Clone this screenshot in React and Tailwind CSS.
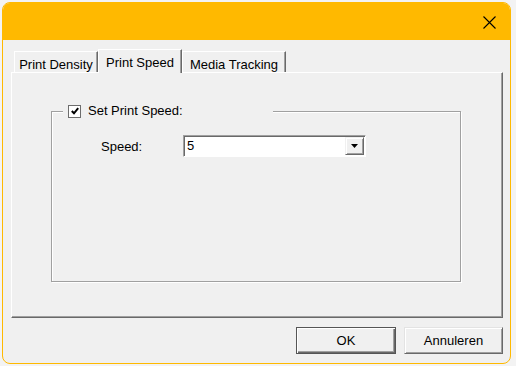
import React from 'react';

const font = { fontFamily: '"Liberation Sans", Arial, sans-serif' };

const Tab = ({ label, width, selected }) => {
  if (selected) {
    return (
      <div
        className="relative z-10 -mb-px flex h-[24px] items-start justify-center border-l border-t border-r border-l-white border-t-white border-r-[#696969] bg-[#f0f0f0] pt-[3px] text-[13px] text-black shadow-[inset_-1px_0_0_#a0a0a0]"
        style={{ width }}
      >
        {label}
      </div>
    );
  }
  return (
    <div
      className="flex h-[21px] items-start justify-center border-l border-t border-r border-l-white border-t-white border-r-[#696969] bg-[#f0f0f0] pt-[3px] text-[13px] text-black shadow-[inset_-1px_0_0_#a0a0a0]"
      style={{ width }}
    >
      {label}
    </div>
  );
};

const App = () => {
  return (
    <div className="h-[366px] w-[516px] overflow-hidden bg-[#f3f3f3] pl-[2px] pt-[2px]" style={font}>
      {/* Dialog window */}
      <div className="flex h-[362px] w-[509px] flex-col overflow-hidden rounded-[8px] border border-[#ffb900] bg-[#f0f0f0]">
        {/* Title bar */}
        <div className="flex h-[37px] shrink-0 items-center justify-end bg-[#ffb900] pr-[14px] pt-[2px]">
          <svg width="13" height="13" viewBox="0 0 13 13">
            <path d="M0.5 0.5L12.5 12.5M12.5 0.5L0.5 12.5" stroke="#000" strokeWidth="1.1" fill="none" />
          </svg>
        </div>

        {/* Body */}
        <div className="flex flex-1 flex-col pl-[8px] pr-[7px] pt-[9px]">
          {/* Tabs */}
          <div className="flex h-[23px] items-end pl-[3px]">
            <Tab label="Print Density" width={84} />
            <Tab label="Print Speed" width={84} selected />
            <Tab label="Media Tracking" width={104} />
          </div>

          {/* Tab panel */}
          <div className="h-[246px] border-b border-l border-r border-t border-b-[#696969] border-l-white border-r-[#696969] border-t-white pl-[39px] pt-[38px] shadow-[inset_-1px_-1px_0_#a0a0a0]">
            {/* Group box */}
            <div className="relative h-[171px] w-[410px] border border-[#a0a0a0] shadow-[inset_1px_1px_0_#fff,1px_1px_0_#fff]">
              <div className="absolute left-[11px] top-[-9px] flex h-[16px] w-[210px] items-center gap-[7px] bg-[#f0f0f0] pl-[5px] text-[13px] text-black">
                <div className="flex h-[13px] w-[13px] items-center justify-center border border-[#6d6d6d] bg-white">
                  <svg width="8" height="8" viewBox="0 0 8 8">
                    <path d="M0.8 4L3 6.3L7.2 1.2" stroke="#000" strokeWidth="2" fill="none" />
                  </svg>
                </div>
                <span>Set Print Speed:</span>
              </div>

              <div className="flex items-center pl-[49px] pt-[23px]">
                <span className="w-[82px] pt-[2px] text-[13px] text-black">Speed:</span>
                <div className="flex h-[22px] w-[183px] items-center justify-between border border-[#a0a0a0] border-b-white border-r-white bg-white pl-[3px] pr-px shadow-[inset_1px_1px_0_#696969]">
                  <span className="text-[13px] text-black">5</span>
                  <div className="flex h-[18px] w-[19px] items-center justify-center border border-[#696969] border-l-[#f0f0f0] border-t-[#f0f0f0] bg-[#f0f0f0] shadow-[inset_1px_1px_0_#fff,inset_-1px_-1px_0_#a0a0a0]">
                    <svg width="7" height="4" viewBox="0 0 7 4">
                      <path d="M0 0H7L3.5 4Z" fill="#000" />
                    </svg>
                  </div>
                </div>
              </div>
            </div>
          </div>

          {/* Buttons */}
          <div className="mt-[9px] flex justify-end gap-[8px]">
            <button className="h-[27px] w-[100px] border border-[#555] bg-[#f0f0f0] text-[13px] text-black shadow-[inset_1px_1px_0_#fff,inset_-1px_-1px_0_#696969,inset_-2px_-2px_0_#a0a0a0]">
              OK
            </button>
            <button className="h-[27px] w-[99px] border border-[#e3e3e3] border-b-[#696969] border-r-[#696969] bg-[#f0f0f0] text-[13px] text-black shadow-[inset_1px_1px_0_#fff,inset_-1px_-1px_0_#a0a0a0]">
              Annuleren
            </button>
          </div>
        </div>
      </div>
    </div>
  );
};

export default App;
